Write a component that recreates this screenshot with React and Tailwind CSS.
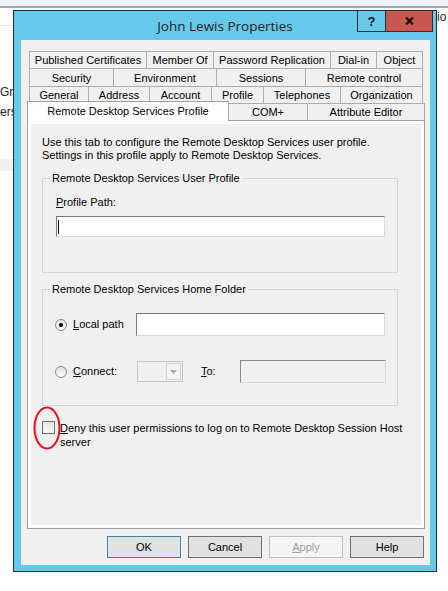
const row1 = [
  ["Published Certificates", "w-[118px]"],
  ["Member Of", "w-[68px]"],
  ["Password Replication", "w-[118px]"],
  ["Dial-in", "w-[47px]"],
  ["Object", "w-[47px]"],
];
const row2 = [
  ["Security", "w-[85px]"],
  ["Environment", "w-[104px]"],
  ["Sessions", "w-[90px]"],
  ["Remote control", "w-[118px]"],
];
const row3 = [
  ["General", "w-[60px]"],
  ["Address", "w-[62px]"],
  ["Account", "w-[63px]"],
  ["Profile", "w-[53px]"],
  ["Telephones", "w-[78px]"],
  ["Organization", "w-[83px]"],
];

function Tab({ label, w }) {
  return (
    <div className={`${w} -ml-px first:ml-0 flex h-full items-center justify-center border border-b-0 border-[#acacac] bg-[#f0f0f0]`}>
      {label}
    </div>
  );
}

function Radio({ checked }) {
  return (
    <span className="flex h-[12px] w-[12px] shrink-0 items-center justify-center rounded-full border border-[#8a8a8a] bg-linear-to-b from-[#e2e2e2] to-[#fafafa]">
      {checked && <span className="h-[4px] w-[4px] rounded-full bg-black" />}
    </span>
  );
}

function Button({ children, kind }) {
  if (kind === "default") {
    return <div className="flex h-[22px] w-[74px] items-center justify-center border border-[#3c7fb1] bg-[#e1e1e1]">{children}</div>;
  }
  if (kind === "disabled") {
    return <div className="flex h-[22px] w-[74px] items-center justify-center border border-[#bfbfbf] bg-[#f4f4f4] text-[#a0a0a0]">{children}</div>;
  }
  return <div className="flex h-[22px] w-[74px] items-center justify-center border border-[#707070] bg-[#e1e1e1]">{children}</div>;
}

export default function App() {
  return (
    <div className="relative h-[591px] w-[448px] overflow-hidden bg-white font-['Liberation_Sans',Arial,sans-serif] text-[11px] leading-[13px] text-black">
      {/* window behind the dialog */}
      <div className="flex flex-col text-[12px] leading-[14px] text-[#1e1e1e]">
        <div className="h-[6px] bg-[#eef3fa]" />
        <div className="h-[2px] bg-[#a3a6ad]" />
        <div className="flex h-[18px] items-center justify-between">
          <div className="h-full w-[13px] border-b border-[#e3e3e3]" />
          <div className="w-[11px] whitespace-nowrap">io</div>
        </div>
        <div className="mt-[59px] w-[13px] whitespace-nowrap">Gr</div>
        <div className="mt-[6px]">ers</div>
        <div className="mt-[40px] h-[12px] w-[13px] bg-[#f0f0f0]" />
      </div>

      {/* dialog */}
      <div className="absolute left-[13px] top-[10px] flex h-[562px] w-[424px] flex-col border border-[#2b2b2b] bg-[#65c9ea]">
        <div className="relative flex h-[29px] items-center justify-center pt-[1px] font-['Open_Sans',sans-serif] text-[13.5px] text-[#1f1f1f]">
          John Lewis Properties
          <div className="absolute right-[3px] top-[-1px] flex h-[22px] font-['Liberation_Sans',Arial,sans-serif]">
            <div className="flex w-[29px] items-center justify-center border border-[#2d2d2d] bg-[#65c9ea] text-[13px] font-bold text-[#111]">?</div>
            <div className="-ml-px flex w-[48px] items-center justify-center border border-[#2d2d2d] bg-[#c7574f]">
              <svg width="9" height="8" viewBox="0 0 9 8">
                <path d="M1 0.5 L8 7.5 M8 0.5 L1 7.5" stroke="#111" strokeWidth="2.2" />
              </svg>
            </div>
          </div>
        </div>

        <div className="ml-[7px] flex h-[525px] w-[409px] flex-col bg-[#f0f0f0] pl-[6px] pt-[11px]">
          {/* tab rows */}
          <div className="flex h-[18px] pl-[2px]">
            {row1.map(([l, w]) => <Tab key={l} label={l} w={w} />)}
          </div>
          <div className="-mt-px flex h-[19px] pl-[2px]">
            {row2.map(([l, w]) => <Tab key={l} label={l} w={w} />)}
          </div>
          <div className="-mt-px flex h-[18px] pl-[2px]">
            {row3.map(([l, w]) => <Tab key={l} label={l} w={w} />)}
          </div>
          <div className="relative z-10 -mt-[3px] flex h-[20px] items-start">
            <div className="flex h-[20px] w-[202px] items-center justify-center border border-b-0 border-[#a0a0a0] bg-white pb-[1px]">
              Remote Desktop Services Profile
            </div>
            <div className="-ml-px mt-[2px] flex h-[17px] w-[80px] items-center justify-center border border-b-0 border-[#acacac] bg-[#f0f0f0]">COM+</div>
            <div className="-ml-px mt-[2px] flex h-[17px] w-[118px] items-center justify-center border border-b-0 border-[#acacac] bg-[#f0f0f0]">Attribute Editor</div>
          </div>

          {/* tab panel */}
          <div className="-mt-px h-[409px] w-[398px] border border-[#a0a0a0] bg-white p-[3px]">
            <div className="flex h-full flex-col bg-[#f0f0f0] pl-[11px] pt-[12px]">
              <p>
                Use this tab to configure the Remote Desktop Services user profile.
                <br />
                Settings in this profile apply to Remote Desktop Services.
              </p>

              <fieldset className="mt-[10px] w-[356px] border border-[#d5d5d5]">
                <legend className="ml-[7px] px-[2px] leading-[13px]">Remote Desktop Services User Profile</legend>
                <div className="pb-[35px] pl-[13px]">
                  <div className="mt-[11px]"><span className="underline">P</span>rofile Path:</div>
                  <div className="mt-[7px] flex h-[21px] w-[329px] items-center border border-[#d9d9d9] border-l-[#7a7a7a] border-t-[#7a7a7a] bg-white pl-[1px]">
                    <span className="h-[14px] w-px bg-black" />
                  </div>
                </div>
              </fieldset>

              <fieldset className="mt-[10px] w-[356px] border border-[#d5d5d5]">
                <legend className="ml-[7px] px-[2px] leading-[13px]">Remote Desktop Services Home Folder</legend>
                <div className="pb-[22px] pl-[12px]">
                  <div className="mt-[17px] flex h-[23px] items-center">
                    <div className="flex w-[81px] items-center gap-[6px]">
                      <Radio checked />
                      <span><span className="underline">L</span>ocal path</span>
                    </div>
                    <div className="h-[23px] w-[249px] border border-[#d9d9d9] border-l-[#7a7a7a] border-t-[#7a7a7a] bg-white" />
                  </div>
                  <div className="mt-[24px] flex h-[23px] items-center">
                    <div className="flex w-[81px] items-center gap-[6px]">
                      <Radio />
                      <span><span className="underline">C</span>onnect:</span>
                    </div>
                    <div className="ml-px flex h-[21px] w-[46px] items-center justify-end border border-[#c4c4c4] bg-[#f0f0f0] pr-[1px]">
                      <div className="flex h-[17px] w-[15px] items-center justify-center border border-[#d4d4d4] bg-[#f4f4f4]">
                        <svg width="7" height="4" viewBox="0 0 7 4">
                          <path d="M0 0 H7 L3.5 4 Z" fill="#a6a6a6" />
                        </svg>
                      </div>
                    </div>
                    <div className="ml-[18px] w-[39px]"><span className="underline">T</span>o:</div>
                    <div className="h-[23px] w-[146px] border border-[#d9d9d9] border-l-[#8a8a8a] border-t-[#8a8a8a] bg-[#f0f0f0]" />
                  </div>
                </div>
              </fieldset>

              <div className="mt-[15px] flex items-start gap-[5px]">
                <span className="h-[13px] w-[13px] shrink-0 border border-[#707070] bg-linear-to-b from-[#e4e4e4] to-[#f8f8f8]" />
                <span className="leading-[14px]">
                  <span className="underline">D</span>eny this user permissions to log on to Remote Desktop Session Host
                  <br />
                  server
                </span>
              </div>
            </div>
          </div>

          {/* buttons */}
          <div className="mt-[7px] flex justify-end gap-[7px] pr-[6px]">
            <Button kind="default">OK</Button>
            <Button>Cancel</Button>
            <Button kind="disabled"><span className="underline">A</span>pply</Button>
            <Button>Help</Button>
          </div>
        </div>
      </div>

      {/* red annotation circle */}
      <svg className="absolute left-[33px] top-[406px]" width="28" height="44" viewBox="0 0 28 44">
        <ellipse cx="14" cy="22" rx="12.5" ry="20.5" fill="none" stroke="#e3101e" strokeWidth="2" />
      </svg>
    </div>
  );
}
